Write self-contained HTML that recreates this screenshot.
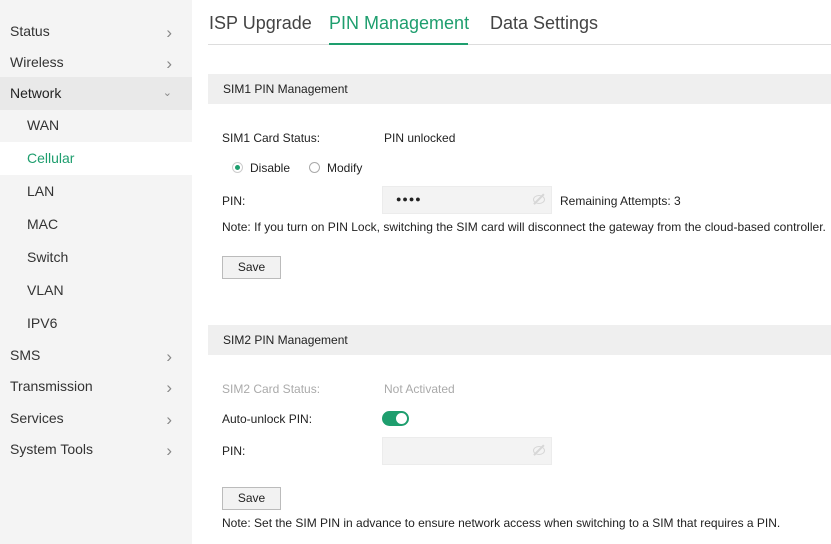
<!DOCTYPE html>
<html><head><style>
*{margin:0;padding:0;box-sizing:border-box}
body{width:831px;height:544px;overflow:hidden;background:#fff;font-family:"Liberation Sans",sans-serif;color:#222;position:relative}
.side{position:absolute;left:0;top:0;width:192px;height:544px;background:#f4f4f4}
.it{position:absolute;left:0;width:192px;height:33px;line-height:33px;font-size:14px;color:#333}
.it span{position:absolute;left:10px}
.it.sub span{left:27px}
.it i{position:absolute;right:20px;top:1px;font-style:normal;color:#888;font-size:17px}
.a{position:absolute;white-space:nowrap}
.t{font-size:12px}
.hdr{position:absolute;left:208px;width:623px;height:30px;background:#efefef;font-size:12px;line-height:30px;padding-left:15px}
.inp{position:absolute;width:170px;height:28px;background:#f3f3f3;border:1px solid #ececec}
.btn{position:absolute;left:222px;width:59px;height:23px;border:1px solid #bbb;background:#f2f2f2;font-size:12px;text-align:center;line-height:21px}
.eye{position:absolute;right:6px;top:8px;width:12px;height:9px;border:1.5px solid #d6d6d6;border-radius:50%}
.eye:after{content:"";position:absolute;left:4px;top:-4px;width:1.5px;height:14px;background:#d6d6d6;transform:rotate(45deg)}
</style></head><body>
<div class="side">
<div class="it" style="top:15px"><span>Status</span><i>›</i></div>
<div class="it" style="top:46px"><span>Wireless</span><i>›</i></div>
<div class="it" style="top:77px;background:#e9e9e9"><span style="color:#222">Network</span><i style="font-size:11px;top:0">&#8964;</i></div>
<div class="it sub" style="top:109px"><span>WAN</span></div>
<div class="it sub" style="top:142px;background:#fff"><span style="color:#1e9e6e">Cellular</span></div>
<div class="it sub" style="top:175px"><span>LAN</span></div>
<div class="it sub" style="top:208px"><span>MAC</span></div>
<div class="it sub" style="top:241px"><span>Switch</span></div>
<div class="it sub" style="top:274px"><span>VLAN</span></div>
<div class="it sub" style="top:307px"><span>IPV6</span></div>
<div class="it" style="top:339px"><span>SMS</span><i>›</i></div>
<div class="it" style="top:370px"><span>Transmission</span><i>›</i></div>
<div class="it" style="top:402px"><span>Services</span><i>›</i></div>
<div class="it" style="top:433px"><span>System Tools</span><i>›</i></div>
</div>

<div class="a" style="left:208px;top:44px;width:623px;height:1px;background:#ddd"></div>
<div class="a" style="left:209px;top:13px;font-size:18px;color:#444">ISP Upgrade</div>
<div class="a" style="left:329px;top:13px;font-size:18px;color:#1e9e6e">PIN Management</div>
<div class="a" style="left:329px;top:43px;width:139px;height:2px;background:#1e9e6e"></div>
<div class="a" style="left:490px;top:13px;font-size:18px;color:#444">Data Settings</div>

<div class="hdr" style="top:74px">SIM1 PIN Management</div>
<div class="a t" style="left:222px;top:131px">SIM1 Card Status:</div>
<div class="a t" style="left:384px;top:131px">PIN unlocked</div>
<div class="a" style="left:232px;top:162px;width:11px;height:11px;border-radius:50%;border:1px solid #ccc;background:#fff"><div style="position:absolute;left:2px;top:2px;width:5px;height:5px;border-radius:50%;background:#1e9e6e"></div></div>
<div class="a t" style="left:250px;top:161px">Disable</div>
<div class="a" style="left:309px;top:162px;width:11px;height:11px;border-radius:50%;border:1px solid #aaa"></div>
<div class="a t" style="left:327px;top:161px">Modify</div>
<div class="a t" style="left:222px;top:194px">PIN:</div>
<div class="inp" style="left:382px;top:186px"><span style="position:absolute;left:13px;top:7px;font-size:9px;letter-spacing:1px">●●●●</span><div class="eye"></div></div>
<div class="a t" style="left:560px;top:194px">Remaining Attempts: 3</div>
<div class="a t" style="left:222px;top:220px;letter-spacing:0.02px">Note: If you turn on PIN Lock, switching the SIM card will disconnect the gateway from the cloud-based controller.</div>
<div class="btn" style="top:256px">Save</div>

<div class="hdr" style="top:325px">SIM2 PIN Management</div>
<div class="a t" style="left:222px;top:382px;color:#aaa">SIM2 Card Status:</div>
<div class="a t" style="left:384px;top:382px;color:#aaa">Not Activated</div>
<div class="a t" style="left:222px;top:412px">Auto-unlock PIN:</div>
<div class="a" style="left:382px;top:411px;width:27px;height:15px;border-radius:8px;background:#1e9e6e"><div style="position:absolute;right:2px;top:2px;width:11px;height:11px;border-radius:50%;background:#fff"></div></div>
<div class="a t" style="left:222px;top:444px">PIN:</div>
<div class="inp" style="left:382px;top:437px"><div class="eye"></div></div>
<div class="btn" style="top:487px">Save</div>
<div class="a t" style="left:222px;top:516px">Note: Set the SIM PIN in advance to ensure network access when switching to a SIM that requires a PIN.</div>
</body></html>
